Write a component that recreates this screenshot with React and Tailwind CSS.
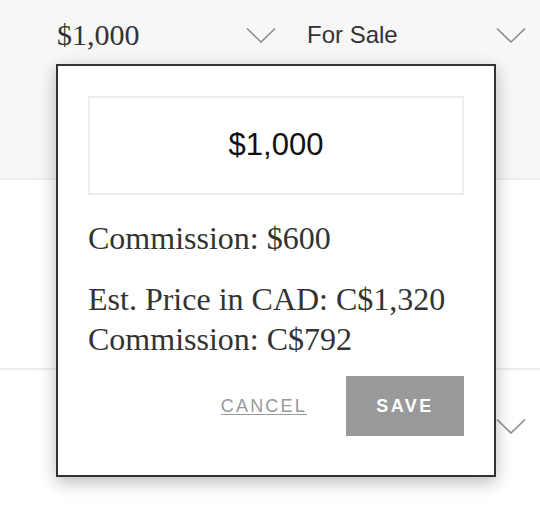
import React from 'react';

const Chevron = () => (
  <svg width="30" height="16" viewBox="0 0 30 16" fill="none" className="shrink-0">
    <polyline points="1,1.5 15,15 29,1.5" stroke="#8c8c8c" strokeWidth="1.6" />
  </svg>
);

export default function App() {
  return (
    <div className="relative w-[540px] h-[522px] bg-white overflow-hidden font-['Liberation_Sans',Arial,sans-serif]">
      <div className="h-[180px] bg-[#f7f7f7] border-b-2 border-[#ececec]">
        <div className="grid grid-cols-[219px_219px] gap-[31px] pl-[57px] pt-[18px]">
          <div className="flex items-center justify-between h-[34px]">
            <span className="font-['Liberation_Serif','Times_New_Roman',serif] text-[30px] leading-[34px] text-[#333]">
              $1,000
            </span>
            <Chevron />
          </div>
          <div className="flex items-center justify-between h-[34px]">
            <span className="text-[24px] leading-[34px] text-[#333]">For Sale</span>
            <Chevron />
          </div>
        </div>
      </div>
      <div className="h-[190px] border-b-2 border-[#ececec]"></div>
      <div className="flex justify-end pr-[14px] pt-[48px]">
        <Chevron />
      </div>

      {/* price popover */}
      <div className="absolute left-[56px] top-[64px] w-[440px] h-[413px] bg-white border-2 border-[#333] shadow-[0_5px_16px_rgba(0,0,0,0.28)] px-[30px] pt-[30px]">
        <div className="h-[99px] border-2 border-[#ececec] flex items-center justify-center">
          <span className="text-[31px] text-[#111]">$1,000</span>
        </div>
        <div className="font-['Liberation_Serif','Times_New_Roman',serif] text-[32px] leading-[40px] text-[#333]">
          <div className="mt-[23px]">Commission: $600</div>
          <div className="mt-[21px]">Est. Price in CAD: C$1,320</div>
          <div>Commission: C$792</div>
        </div>
        <div className="mt-[17px] flex items-center justify-end">
          <button className="text-[18px] tracking-[2.2px] text-[#999] underline underline-offset-[2px] mr-[39px]">
            CANCEL
          </button>
          <button className="w-[118px] h-[60px] bg-[#999] text-white font-bold text-[18px] tracking-[2.5px]">
            SAVE
          </button>
        </div>
      </div>
    </div>
  );
}
